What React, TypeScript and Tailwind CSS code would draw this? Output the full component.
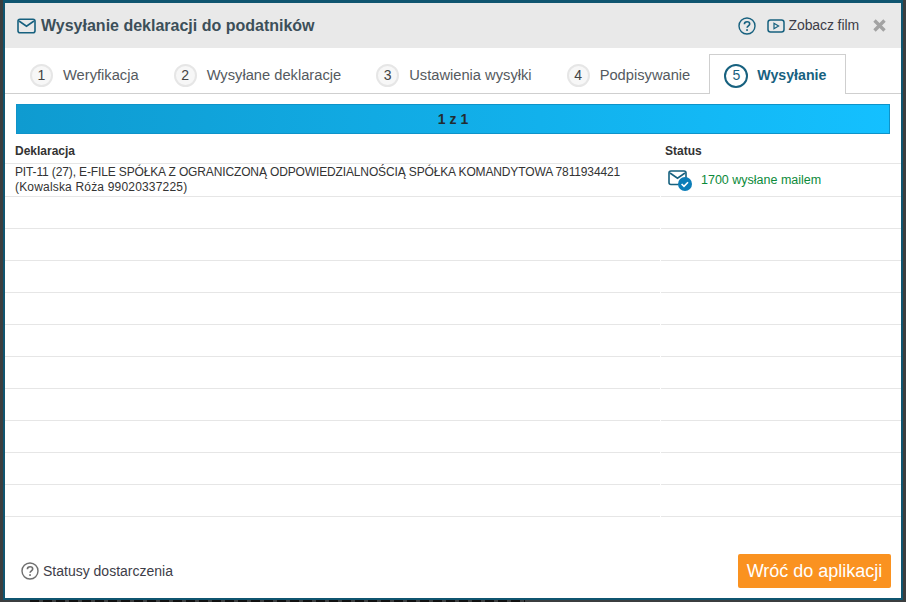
const font = "font-['Liberation_Sans',Arial,sans-serif]";

const tabs = [
  { n: 1, label: "Weryfikacja" },
  { n: 2, label: "Wysyłane deklaracje" },
  { n: 3, label: "Ustawienia wysyłki" },
  { n: 4, label: "Podpisywanie" },
];

function Mail() {
  return (
    <svg width="19" height="16" viewBox="0 0 19 16" fill="none" stroke="#17617f" strokeWidth="1.6">
      <rect x="1" y="1.2" width="17" height="13.6" rx="2" />
      <path d="M2 3l7.5 5.2L17 3" />
    </svg>
  );
}

function Help({ color, size }: { color: string; size: number }) {
  return (
    <svg width={size} height={size} viewBox="0 0 18 18" fill="none">
      <circle cx="9" cy="9" r="8" stroke={color} strokeWidth="1.4" />
      <path d="M6.4 7.2c0-1.6 1.2-2.5 2.7-2.5s2.6.9 2.6 2.2c0 1.9-2.6 2-2.6 3.9" stroke={color} strokeWidth="1.6" />
      <rect x="8.2" y="12.2" width="1.7" height="1.7" fill={color} />
    </svg>
  );
}

function Row({ children, first }: { children?: React.ReactNode; first?: boolean }) {
  return (
    <div className={`flex gap-px ${first ? "h-[33px]" : "h-[32px]"}`}>
      {children ?? (
        <>
          <div className="w-[655px] border-b border-[#e6e6e6]" />
          <div className="flex-1 border-b border-[#e6e6e6]" />
        </>
      )}
    </div>
  );
}

export default function App() {
  return (
    <div className={`${font} h-[602px] w-[906px] overflow-hidden bg-[#3b3e3f] pl-[3px]`}>
      <div className="flex h-[600px] w-[900px] flex-col border-x-2 border-t-[3px] border-b-2 border-[#0f5570] bg-white">
        <div className="flex h-[45px] shrink-0 items-center bg-[#e9e9e9] pl-[12px] pr-[15px]">
          <Mail />
          <span className="ml-[5px] text-[16px] font-bold text-[#3c4f59]">Wysyłanie deklaracji do podatników</span>
          <div className="ml-auto flex items-center">
            <Help color="#17617f" size={18} />
            <svg className="ml-[11px]" width="18" height="14" viewBox="0 0 18 14" fill="none" stroke="#17617f" strokeWidth="1.5">
              <rect x="1" y="1" width="16" height="12" rx="2.5" />
              <path d="M7 4.2v5.6l4.6-2.8z" strokeWidth="1.2" />
            </svg>
            <span className="ml-[4px] text-[14px] tracking-[-0.1px] text-[#3d3d48]">Zobacz film</span>
            <svg className="ml-[14px]" width="13" height="13" viewBox="0 0 13 13" stroke="#a3a3a3" strokeWidth="3.4">
              <path d="M1.5 1.5l10 10M11.5 1.5l-10 10" />
            </svg>
          </div>
        </div>

        <div className="flex h-[46px] shrink-0 items-end border-b border-[#cfcfcf] pl-[9px]">
          {tabs.map((t) => (
            <div key={t.n} className="flex h-[39px] items-center pl-[16px] pr-[19px] pt-[3px]">
              <span className="flex h-[23px] w-[23px] items-center justify-center rounded-full border-2 border-[#e6e6e6] bg-[#f7f7f7] text-[14px] text-[#444]">
                {t.n}
              </span>
              <span className="ml-[10px] text-[14.7px] text-[#555a60]">{t.label}</span>
            </div>
          ))}
          <div className="-mb-px flex h-[40px] items-center border border-b-0 border-[#cfcfcf] bg-white pl-[14px] pr-[19px] pt-[2px]">
            <span className="flex h-[24px] w-[24px] items-center justify-center rounded-full border-2 border-[#17617f] text-[14px] text-[#17617f]">
              5
            </span>
            <span className="ml-[9px] text-[14.2px] font-bold text-[#17617f]">Wysyłanie</span>
          </div>
        </div>

        <div className="ml-[11px] mt-[10px] flex h-[30px] w-[874px] shrink-0 items-center justify-center border border-[#0e93c9] bg-gradient-to-r from-[#0f9bd0] to-[#14c0ff] text-[14px] font-bold text-[#222c31]">
          1 z 1
        </div>

        <div className="flex h-[30px] shrink-0 items-end border-b border-[#e6e6e6] pb-[3px] pl-[10px] text-[12px] font-bold text-[#333]">
          <span className="w-[650px]">Deklaracja</span>
          <span>Status</span>
        </div>

        <Row first>
          <div className="flex h-full w-[655px] flex-col justify-center border-b border-[#e6e6e6] pl-[10px] text-[12px] leading-[15px] text-[#333]">
            <span className="tracking-[-0.135px]">
              PIT-11 (27), E-FILE SPÓŁKA Z OGRANICZONĄ ODPOWIEDZIALNOŚCIĄ SPÓŁKA KOMANDYTOWA 7811934421
            </span>
            <span className="tracking-[0.18px]">(Kowalska Róża 99020337225)</span>
          </div>
          <div className="flex h-full flex-1 items-center border-b border-[#e6e6e6] pl-[7px]">
            <svg width="24" height="21" viewBox="0 0 24 21" fill="none">
              <rect x="1" y="1" width="17" height="13.5" rx="2" stroke="#17617f" strokeWidth="1.6" />
              <path d="M2 3l7.5 5.2L17 3" stroke="#17617f" strokeWidth="1.6" />
              <circle cx="17" cy="14" r="7" fill="#0b7db8" />
              <path d="M13.6 14l2.4 2.4 4-4.2" stroke="#fff" strokeWidth="1.6" />
            </svg>
            <span className="ml-[9px] text-[12.5px] text-[#0c8a3a]">1700 wysłane mailem</span>
          </div>
        </Row>
        {Array.from({ length: 10 }, (_, i) => (
          <Row key={i} />
        ))}

        <div className="flex flex-1 items-end justify-between pb-[10px] pl-[16px] pr-[10px]">
          <div className="flex h-[34px] items-center">
            <Help color="#6f6f6f" size={18} />
            <span className="ml-[4px] text-[14px] text-[#3d3d48]">Statusy dostarczenia</span>
          </div>
          <div className="flex h-[34px] w-[153px] items-center justify-center rounded-[2px] bg-[#fa9220] text-[18px] text-white">
            Wróć do aplikacji
          </div>
        </div>
      </div>
      <div className="ml-[27px] h-[2px] w-[495px] bg-[repeating-linear-gradient(90deg,#111_0,#111_9px,transparent_9px,transparent_13px)]" />
    </div>
  );
}
